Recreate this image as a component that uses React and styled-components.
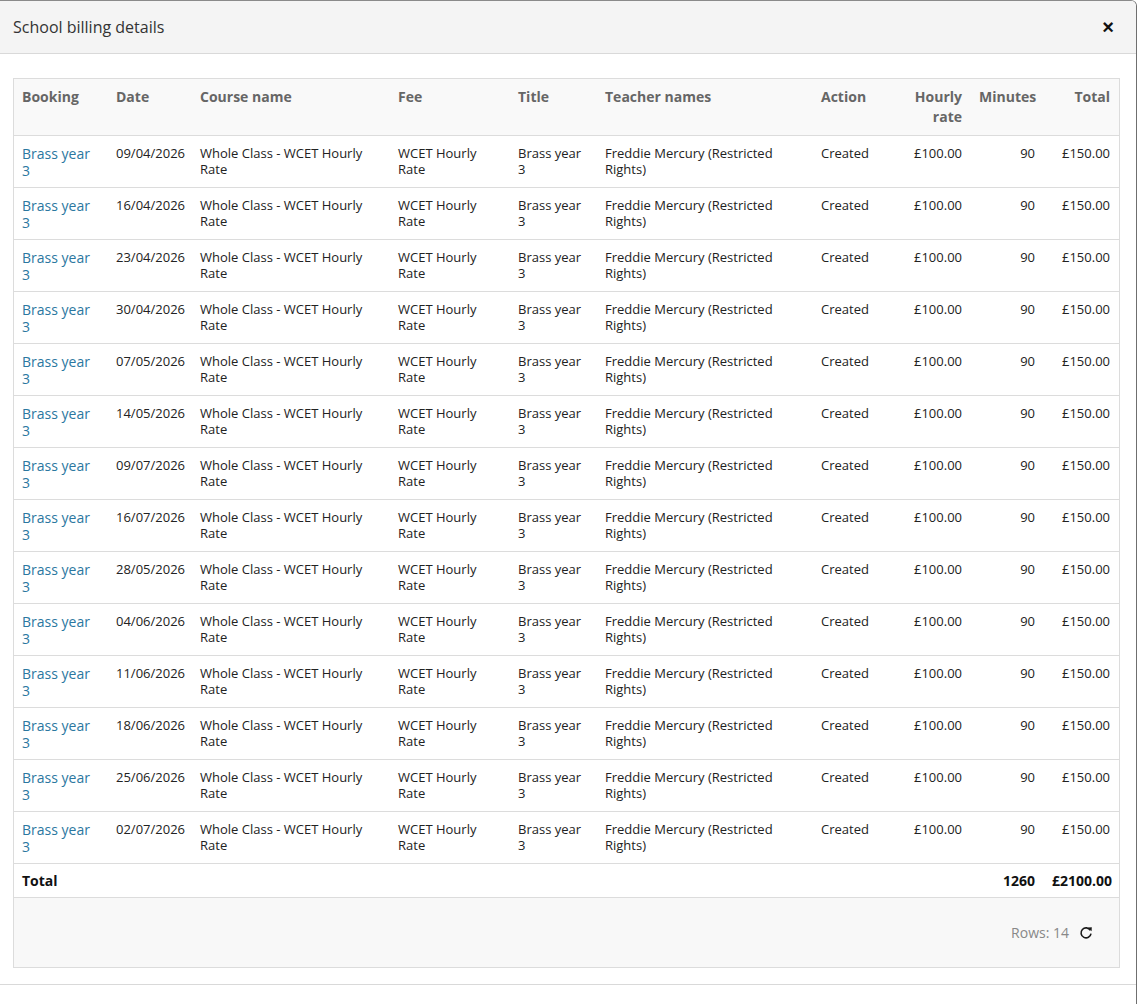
import React from "react";
import styled, { createGlobalStyle } from "styled-components";

const Global = createGlobalStyle`
  html, body {
    margin: 0;
    padding: 0;
    background: #fff;
    font-family: "Open Sans", "Noto Sans", Arial, sans-serif;
    color: #222;
  }
`;

const Modal = styled.div`
  box-sizing: border-box;
  width: 1137px;
  height: 1004px;
  background: #fff;
  border-top: 1px solid #8a8a8a;
  border-right: 1px solid #6f6f6f;
  border-top-right-radius: 6px;
  overflow: hidden;
  display: flex;
  flex-direction: column;
`;

const Header = styled.div`
  height: 52px;
  background: #f4f4f4;
  border-bottom: 1px solid #d9d9d9;
  display: flex;
  align-items: center;
  justify-content: space-between;
  padding: 0 22px 0 13px;
`;

const Title = styled.h4`
  margin: 0;
  font-size: 16px;
  font-weight: 400;
  color: #333;
`;

const Close = styled.button`
  border: 0;
  background: none;
  padding: 0;
  font-size: 20px;
  font-weight: 700;
  line-height: 1;
  color: #111;
  font-family: Arial, "Liberation Sans", sans-serif;
  cursor: pointer;
`;

const Body = styled.div`
  padding: 24px 16px 16px 13px;
  border-bottom: 1px solid #d9d9d9;
`;

const Grid = styled.div`
  border: 1px solid #dcdcdc;
`;

const Table = styled.table`
  width: 100%;
  border-collapse: collapse;
  table-layout: fixed;
  font-size: 13px;
`;

const Th = styled.th`
  background: #f9f9f9;
  color: #666;
  font-size: 14px;
  font-weight: 700;
  line-height: 20px;
  text-align: ${(p) => (p.$right ? "right" : "left")};
  vertical-align: top;
  padding: 8px 9px 8px 8px;
  height: 40px;
  border-bottom: 1px solid #dcdcdc;
`;

const Td = styled.td`
  text-align: ${(p) => (p.$right ? "right" : "left")};
  vertical-align: top;
  padding: 9px 9px 8px 8px;
  line-height: 16px;
  height: 34px;
  color: #222;
  border-bottom: 1px solid #dcdcdc;
`;

const Link = styled.a`
  color: #2b77a0;
  font-size: 14px;
  line-height: 17px;
  text-decoration: none;
`;

const TotalCell = styled.td`
  text-align: ${(p) => (p.$right ? "right" : "left")};
  font-weight: 700;
  font-size: 14px;
  color: #111;
  padding: 8px 9px 8px 8px;
  line-height: 17px;
`;

const Footer = styled.div`
  height: 69px;
  background: #f8f8f8;
  border-top: 1px solid #dcdcdc;
  display: flex;
  align-items: center;
  justify-content: flex-end;
  padding-right: 26px;
  gap: 10px;
  color: #888;
  font-size: 14px;
`;

const RefreshIcon = () => (
  <svg width="14" height="14" viewBox="0 0 14 14">
    <path
      d="M11.4 4.4 A5 5 0 1 0 12 7.6"
      fill="none"
      stroke="#1a1a1a"
      strokeWidth="1.6"
    />
    <path d="M9 1.6 L12.8 1.2 L12.6 5.2 Z" fill="#1a1a1a" />
  </svg>
);

const dates = [
  "09/04/2026", "16/04/2026", "23/04/2026", "30/04/2026", "07/05/2026",
  "14/05/2026", "09/07/2026", "16/07/2026", "28/05/2026", "04/06/2026",
  "11/06/2026", "18/06/2026", "25/06/2026", "02/07/2026",
];

const cols = [
  { label: "Booking", w: 94 },
  { label: "Date", w: 84 },
  { label: "Course name", w: 198 },
  { label: "Fee", w: 120 },
  { label: "Title", w: 87 },
  { label: "Teacher names", w: 216 },
  { label: "Action", w: 87 },
  { label: "Hourly rate", w: 71, right: true },
  { label: "Minutes", w: 73, right: true },
  { label: "Total", w: 75, right: true },
];

export default function App() {
  return (
    <>
      <Global />
      <Modal>
        <Header>
          <Title>School billing details</Title>
          <Close>×</Close>
        </Header>
        <Body>
          <Grid>
            <Table>
              <colgroup>
                {cols.map((c) => (
                  <col key={c.label} style={{ width: c.w }} />
                ))}
              </colgroup>
              <thead>
                <tr>
                  {cols.map((c) => (
                    <Th key={c.label} $right={c.right}>
                      {c.label}
                    </Th>
                  ))}
                </tr>
              </thead>
              <tbody>
                {dates.map((d) => (
                  <tr key={d}>
                    <Td>
                      <Link href="#">Brass year 3</Link>
                    </Td>
                    <Td>{d}</Td>
                    <Td>Whole Class - WCET Hourly Rate</Td>
                    <Td>WCET Hourly Rate</Td>
                    <Td>Brass year 3</Td>
                    <Td>Freddie Mercury (Restricted Rights)</Td>
                    <Td>Created</Td>
                    <Td $right>£100.00</Td>
                    <Td $right>90</Td>
                    <Td $right>£150.00</Td>
                  </tr>
                ))}
                <tr>
                  <TotalCell>Total</TotalCell>
                  <TotalCell colSpan={7} />
                  <TotalCell $right>1260</TotalCell>
                  <TotalCell $right>£2100.00</TotalCell>
                </tr>
              </tbody>
            </Table>
            <Footer>
              <span>Rows: 14</span>
              <RefreshIcon />
            </Footer>
          </Grid>
        </Body>
      </Modal>
    </>
  );
}
